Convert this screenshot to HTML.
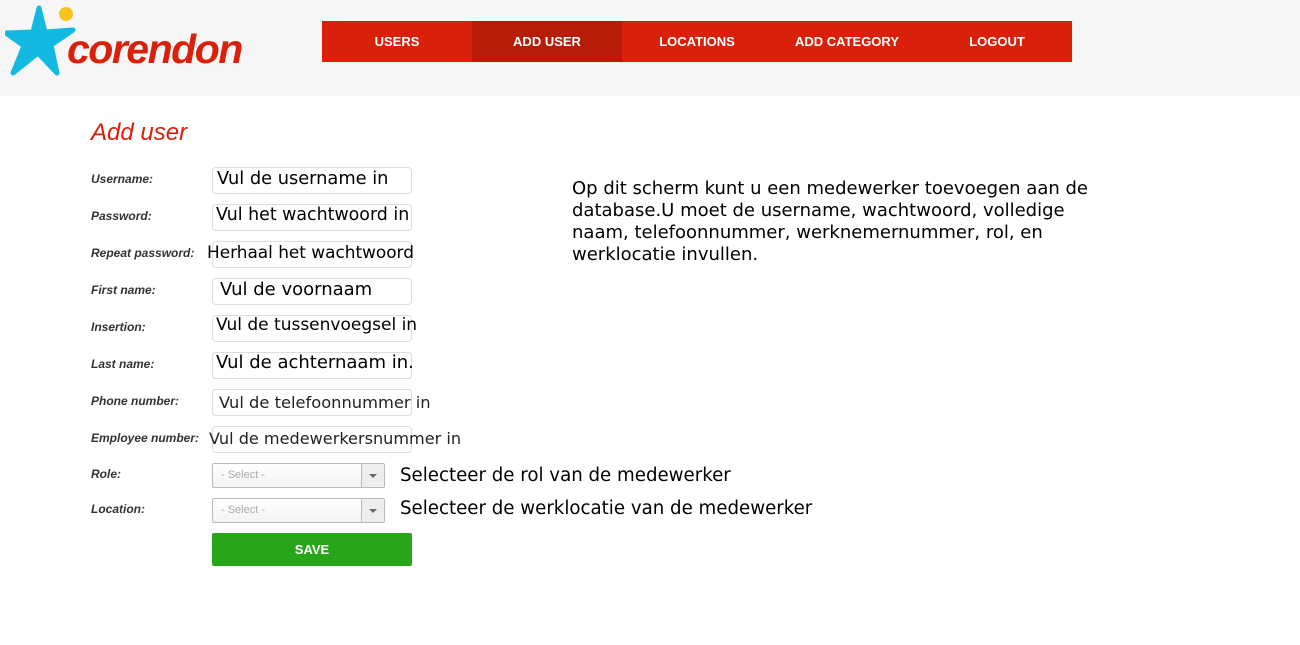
<!DOCTYPE html>
<html><head><style>
body{margin:0;width:1300px;height:645px;background:#fff;font-family:"Liberation Sans",sans-serif;position:relative;overflow:hidden}
.hdr{position:absolute;left:0;top:0;width:1300px;height:96px;background:#f6f6f6}
.nav{position:absolute;left:322px;top:21px;height:41px;width:750px;background:#d9200a;display:flex}
.nav div{width:150px;text-align:center;line-height:41px;color:#fff;font-weight:bold;font-size:13px}
.nav .a{background:#b61c08}
h1{position:absolute;left:91px;top:119px;margin:0;font-weight:normal;font-style:italic;font-size:24px;color:#d9200a}
.l{position:absolute;left:91px;font-size:12px;font-style:italic;font-weight:bold;color:#333}
.i{position:absolute;left:212px;width:198px;height:25px;border:1px solid #ddd;border-radius:4px}
.t{position:absolute;font-family:"DejaVu Sans",sans-serif;font-size:16px;color:#000;white-space:nowrap}
.s{position:absolute;left:212px;width:171px;height:23px;border:1px solid #bbb;border-radius:2px;font-size:11px;color:#aaa;line-height:23px;text-indent:8px;background:linear-gradient(#fff,#f3f3f3)}
.s b{position:absolute;right:0;top:0;width:22px;height:23px;border-left:1px solid #bbb;background:#eee}
.s b:after{content:"";position:absolute;left:7px;top:10px;border:4px solid transparent;border-top:4px solid #666}
</style></head><body>
<div class="hdr">
<svg width="75" height="72" style="position:absolute;left:5px;top:5px" viewBox="0 0 75 72"><circle cx="61" cy="9" r="7" fill="#f8c21f"/><path d="M34 3 L40 27 L68 25 L46 40 L52 68 L33 48 L8 68 L19 41 L1 28 L28 27 Z" fill="#13b9e1" stroke="#13b9e1" stroke-width="5" stroke-linejoin="round"/></svg>
<div style="position:absolute;left:67px;top:26px;font-size:41px;font-weight:bold;font-style:italic;color:#d9200a;letter-spacing:-1.5px;line-height:46px">corendon</div>
<div class="nav"><div>USERS</div><div class="a">ADD USER</div><div>LOCATIONS</div><div>ADD CATEGORY</div><div>LOGOUT</div></div>
</div>
<h1>Add user</h1>
<div class="l" style="top:172px">Username:</div>
<div class="l" style="top:209px">Password:</div>
<div class="l" style="top:246px">Repeat password:</div>
<div class="l" style="top:283px">First name:</div>
<div class="l" style="top:320px">Insertion:</div>
<div class="l" style="top:357px">Last name:</div>
<div class="l" style="top:394px">Phone number:</div>
<div class="l" style="top:431px">Employee number:</div>
<div class="l" style="top:467px">Role:</div>
<div class="l" style="top:502px">Location:</div>
<div class="i" style="top:167px"></div><div class="t" style="left:217px;top:168px;font-size:17.8px">Vul de username in</div>
<div class="i" style="top:204px"></div><div class="t" style="left:216px;top:205px;font-size:17.4px">Vul het wachtwoord in</div>
<div class="i" style="top:241px"></div><div class="t" style="left:207px;top:242px;font-size:16.9px">Herhaal het wachtwoord</div>
<div class="i" style="top:278px"></div><div class="t" style="left:220px;top:279px;font-size:18px">Vul de voornaam</div>
<div class="i" style="top:315px"></div><div class="t" style="left:216px;top:315px;font-size:17px">Vul de tussenvoegsel in</div>
<div class="i" style="top:352px"></div><div class="t" style="left:216px;top:352px;font-size:18px">Vul de achternaam in.</div>
<div class="i" style="top:389px"></div><div class="t" style="left:219px;top:393px;color:#222;font-size:16.3px">Vul de telefoonnummer in</div>
<div class="i" style="top:426px"></div><div class="t" style="left:209px;top:429px;color:#222;font-size:16.1px">Vul de medewerkersnummer in</div>
<div class="s" style="top:463px">- Select -<b></b></div>
<div class="s" style="top:498px">- Select -<b></b></div>
<div class="t" style="left:400px;top:465px;font-size:18.2px">Selecteer de rol van de medewerker</div>
<div class="t" style="left:400px;top:498px;font-size:18.2px">Selecteer de werklocatie van de medewerker</div>
<div style="position:absolute;left:212px;top:533px;width:200px;height:33px;background:#27a61a;border-radius:2px;color:#fff;font-weight:bold;font-size:13px;text-align:center;line-height:33px">SAVE</div>
<div class="t" style="left:572px;top:178px;font-size:18px;line-height:22px;white-space:normal;width:530px">Op dit scherm kunt u een medewerker toevoegen aan de database.U moet de username, wachtwoord, volledige naam, telefoonnummer, werknemernummer, rol, en werklocatie invullen.</div>
</body></html>
